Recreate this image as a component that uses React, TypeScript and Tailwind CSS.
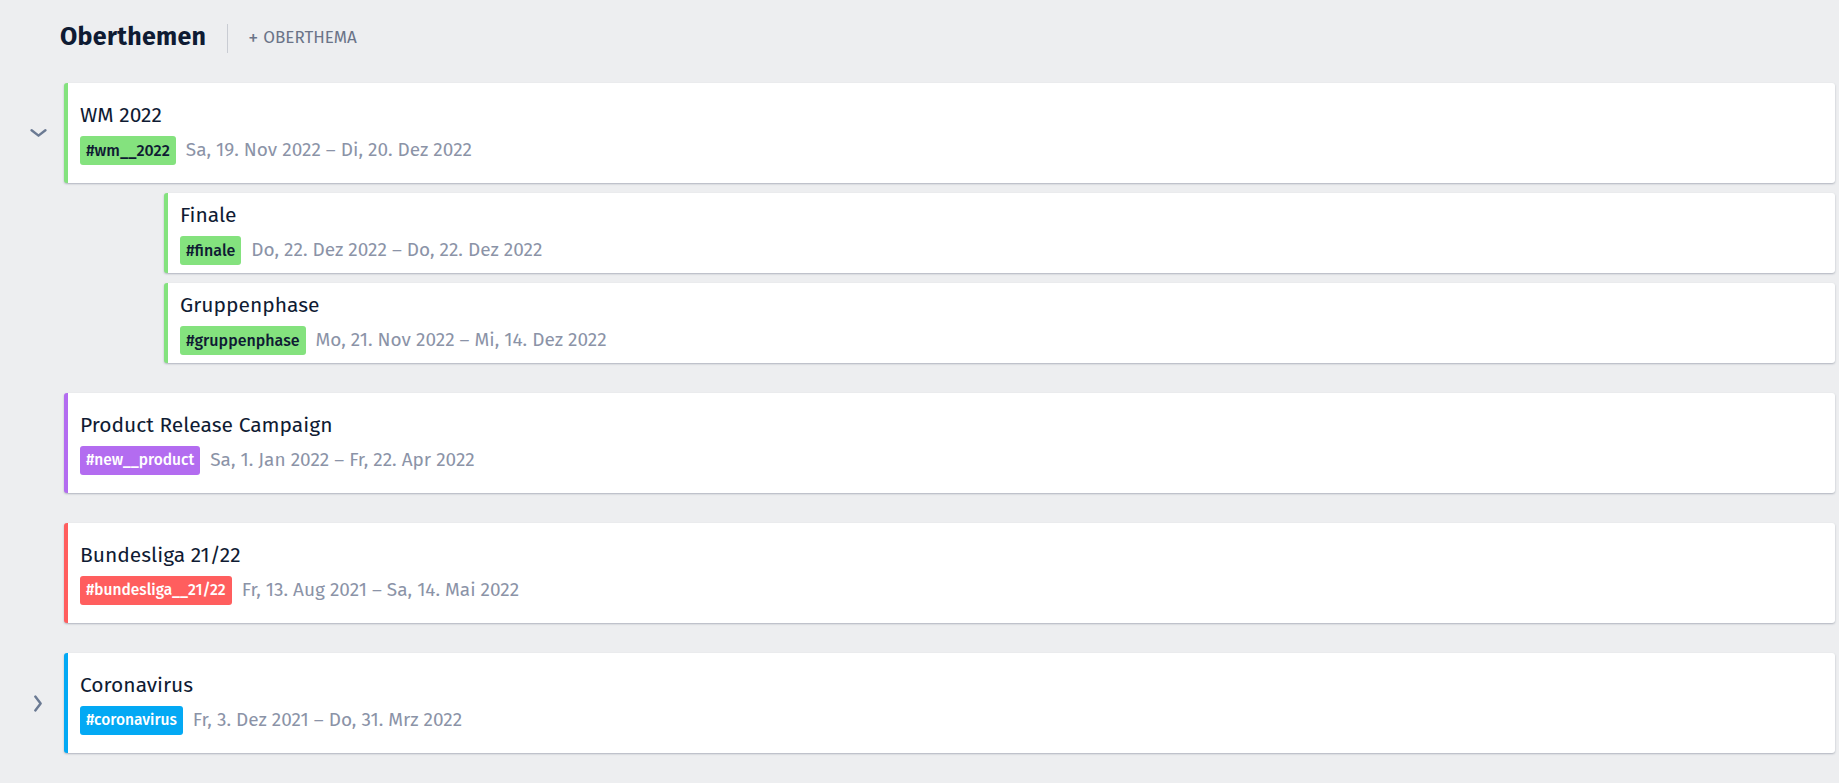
import React from 'react';

type Topic = {
  id: string;
  title: string;
  tag: string;
  range: string;
  color: string;
  tagClass: string;
  expanded?: boolean;
  collapsed?: boolean;
  children?: Topic[];
};

const green = 'bg-[#84e27e] text-[#0f1b33] text-[16px]';

const topics: Topic[] = [
  {
    id: 'wm',
    title: 'WM 2022',
    tag: '#wm__2022',
    range: 'Sa, 19. Nov 2022 – Di, 20. Dez 2022',
    color: 'border-[#84e27e]',
    tagClass: green,
    expanded: true,
    children: [
      {
        id: 'finale',
        title: 'Finale',
        tag: '#finale',
        range: 'Do, 22. Dez 2022 – Do, 22. Dez 2022',
        color: 'border-[#84e27e]',
        tagClass: green,
      },
      {
        id: 'gruppe',
        title: 'Gruppenphase',
        tag: '#gruppenphase',
        range: 'Mo, 21. Nov 2022 – Mi, 14. Dez 2022',
        color: 'border-[#84e27e]',
        tagClass: green,
      },
    ],
  },
  {
    id: 'product',
    title: 'Product Release Campaign',
    tag: '#new__product',
    range: 'Sa, 1. Jan 2022 – Fr, 22. Apr 2022',
    color: 'border-[#b36cf0]',
    tagClass: 'bg-[#b36cf0] text-white text-[15.5px]',
  },
  {
    id: 'bundesliga',
    title: 'Bundesliga 21/22',
    tag: '#bundesliga__21/22',
    range: 'Fr, 13. Aug 2021 – Sa, 14. Mai 2022',
    color: 'border-[#ff5e5e]',
    tagClass: 'bg-[#ff5e5e] text-white text-[15.5px]',
  },
  {
    id: 'corona',
    title: 'Coronavirus',
    tag: '#coronavirus',
    range: 'Fr, 3. Dez 2021 – Do, 31. Mrz 2022',
    color: 'border-[#03a9f4]',
    tagClass: 'bg-[#03a9f4] text-white text-[15.5px]',
    collapsed: true,
  },
];

const Chevron = ({ dir }: { dir: 'down' | 'right' }) => (
  <svg width="17" height="17" viewBox="0 0 16 16" fill="none" stroke="#6b7a93" strokeWidth="2.3" strokeLinecap="round" strokeLinejoin="round">
    {dir === 'down' ? <path d="M1.5 5l6.5 5 6.5-5" /> : <path d="M5 1.5l5 6.5-5 6.5" />}
  </svg>
);

const Card = ({ t, sub }: { t: Topic; sub?: boolean }) => (
  <div
    className={`flex-1 bg-white rounded-[3px] border-l-4 ${t.color} shadow-[0_1px_2px_rgba(60,70,95,0.35)] pl-3 pr-4 ${
      sub ? 'h-[80px] pt-2' : 'h-[100px] pt-[18px]'
    }`}
  >
    <div className="text-[21px] leading-[28px] text-[#0f1b33]">{t.title}</div>
    <div className="flex items-center gap-[10px] mt-[7px]">
      <span className={`rounded-[3px] px-[6px] h-[29px] flex items-center font-medium ${t.tagClass}`}>{t.tag}</span>
      <span className="text-[19px] text-[#8b93a7]">{t.range}</span>
    </div>
  </div>
);

export default function App() {
  return (
    <div
      className="min-h-screen bg-[#edeef0] pr-1 pb-[30px]"
      style={{ fontFamily: '"Fira Sans", "Noto Sans", sans-serif' }}
    >
      <div className="h-[83px] flex items-center pl-[60px] pb-[7px]">
        <h1 className="text-[25px] font-bold text-[#0f1b33] tracking-[0.3px]">Oberthemen</h1>
        <div className="w-px h-[29px] bg-[#c9ccd3] ml-[21px] mr-[20px]" />
        <button className="text-[17px] text-[#6b7488] flex items-center gap-[5px]">
          <span className="text-[20px] leading-none">+</span>OBERTHEMA
        </button>
      </div>

      <div className="flex flex-col gap-[30px]">
        {topics.map(t => (
          <div key={t.id} className="flex flex-col gap-[10px]">
            <div className="flex">
              <div className="w-[64px] flex items-center justify-center pl-[12px]">
                {t.expanded && <Chevron dir="down" />}
                {t.collapsed && <Chevron dir="right" />}
              </div>
              <Card t={t} />
            </div>
            {t.expanded &&
              t.children?.map(c => (
                <div key={c.id} className="flex pl-[164px]">
                  <Card t={c} sub />
                </div>
              ))}
          </div>
        ))}
      </div>
    </div>
  );
}
